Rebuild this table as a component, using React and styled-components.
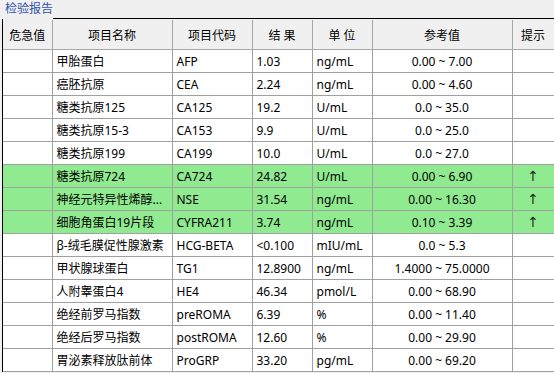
import React from 'react';
import styled, { createGlobalStyle } from 'styled-components';

const GlobalStyle = createGlobalStyle`
  html, body {
    margin: 0;
    padding: 0;
    background: #f0f0f0;
  }
  body {
    font-family: 'Noto Sans', 'Noto Sans CJK SC', sans-serif;
    font-size: 12px;
    color: #000;
  }
`;

const Page = styled.div`
  width: 554px;
  height: 373px;
  overflow: hidden;
  background: #f0f0f0;
`;

const TabStrip = styled.div`
  display: flex;
  height: 19px;
`;

const Tab = styled.div`
  width: 53px;
  padding-left: 5px;
  box-sizing: border-box;
  color: #2f55a8;
  font-size: 12px;
  line-height: 17px;
`;

const TabFiller = styled.div`
  flex: 1;
  border-bottom: 1px solid #000;
`;

const Frame = styled.div`
  margin-left: 2px;
  border-left: 1px solid #000;
  padding-top: 1px;
  background: #f0f0f0;
`;

const Table = styled.table`
  border-collapse: collapse;
  table-layout: fixed;
  width: 551px;
  background: #fff;
`;

const Th = styled.th`
  height: 29px;
  padding: 0;
  font-weight: normal;
  background: #f0f0f0;
  border: 1px solid #a8a8a8;
  border-top: none;
  text-align: center;
  white-space: pre;
  &:first-child { border-left: none; }
`;

const Row = styled.tr`
  background: ${(p) => (p.$alert ? '#90ea90' : '#fff')};
`;

const Td = styled.td`
  height: 22px;
  padding: 0 0 0 ${(p) => (p.$center ? 0 : '4px')};
  border: 1px solid #a0a0a0;
  text-align: ${(p) => (p.$center ? 'center' : 'left')};
  white-space: nowrap;
  overflow: hidden;
  &:first-child { border-left: none; }
`;

const Arrow = styled.span`
  color: #1f2f1f;
  font-family: 'DejaVu Sans', sans-serif;
  font-size: 14px;
  line-height: 14px;
`;

const cols = [49, 120, 80, 60, 60, 140, 42];

// the grid shows the long NSE name already cut with dots
const rows = [
  ['甲胎蛋白', 'AFP', '1.03', 'ng/mL', '0.00 ~ 7.00', false],
  ['癌胚抗原', 'CEA', '2.24', 'ng/mL', '0.00 ~ 4.60', false],
  ['糖类抗原125', 'CA125', '19.2', 'U/mL', '0.0 ~ 35.0', false],
  ['糖类抗原15-3', 'CA153', '9.9', 'U/mL', '0.0 ~ 25.0', false],
  ['糖类抗原199', 'CA199', '10.0', 'U/mL', '0.0 ~ 27.0', false],
  ['糖类抗原724', 'CA724', '24.82', 'U/mL', '0.00 ~ 6.90', true],
  ['神经元特异性烯醇...', 'NSE', '31.54', 'ng/mL', '0.00 ~ 16.30', true],
  ['细胞角蛋白19片段', 'CYFRA211', '3.74', 'ng/mL', '0.10 ~ 3.39', true],
  ['β-绒毛膜促性腺激素', 'HCG-BETA', '<0.100', 'mIU/mL', '0.0 ~ 5.3', false],
  ['甲状腺球蛋白', 'TG1', '12.8900', 'ng/mL', '1.4000 ~ 75.0000', false],
  ['人附睾蛋白4', 'HE4', '46.34', 'pmol/L', '0.00 ~ 68.90', false],
  ['绝经前罗马指数', 'preROMA', '6.39', '%', '0.00 ~ 11.40', false],
  ['绝经后罗马指数', 'postROMA', '12.60', '%', '0.00 ~ 29.90', false],
  ['胃泌素释放肽前体', 'ProGRP', '33.20', 'pg/mL', '0.00 ~ 69.20', false],
];

export default function App() {
  return (
    <Page>
      <GlobalStyle />
      <TabStrip>
        <Tab>检验报告</Tab>
        <TabFiller />
      </TabStrip>
      <Frame>
        <Table>
          <colgroup>
            {cols.map((w, i) => (
              <col key={i} style={{ width: w }} />
            ))}
          </colgroup>
          <thead>
            <tr>
              <Th>危急值</Th>
              <Th>项目名称</Th>
              <Th>项目代码</Th>
              <Th>结 果</Th>
              <Th>单 位</Th>
              <Th>参考值</Th>
              <Th>提示</Th>
            </tr>
          </thead>
          <tbody>
            {rows.map(([name, code, result, unit, range, high]) => (
              <Row key={code} $alert={high}>
                <Td></Td>
                <Td>{name}</Td>
                <Td>{code}</Td>
                <Td>{result}</Td>
                <Td>{unit}</Td>
                <Td $center>{range}</Td>
                <Td $center>{high && <Arrow>↑</Arrow>}</Td>
              </Row>
            ))}
          </tbody>
        </Table>
      </Frame>
    </Page>
  );
}
